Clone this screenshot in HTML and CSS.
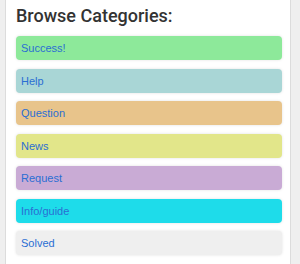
FILE: index.html
```
<!DOCTYPE html>
<html>
    <head>
        <meta content="text/html;charset=utf-8" http-equiv="Content-Type" />
        <title>Browse Categories</title>
        <link rel="stylesheet" href="styles.css">
    </head>
    <body>
        <div class="panel">
            <h2 class="panel-title">Browse Categories:</h2>
            <ul class="cat-list">
                <li><a href="#" class="cat cat-success">Success!</a></li>
                <li><a href="#" class="cat cat-help">Help</a></li>
                <li><a href="#" class="cat cat-question">Question</a></li>
                <li><a href="#" class="cat cat-news">News</a></li>
                <li><a href="#" class="cat cat-request">Request</a></li>
                <li><a href="#" class="cat cat-info">Info/guide</a></li>
                <li><a href="#" class="cat cat-solved">Solved</a></li>
            </ul>
        </div>
    </body>
</html>
```

FILE: styles.css
```
* {
    box-sizing: border-box;
}

body {
    margin: 0;
    background-color: #efefef;
    font-family: "Liberation Sans", Arial, Helvetica, sans-serif;
}

.panel {
    margin-left: 5px;
    width: 286px;
    min-height: 100vh;
    background-color: #fff;
    border: 1px solid #dcdcdc;
    border-top: none;
    border-bottom: none;
    padding: 6px 8px 0 10px;
}

.panel-title {
    margin: 0 0 10px 0;
    font-family: Roboto, "Liberation Sans", sans-serif;
    font-size: 18px;
    line-height: 20px;
    font-weight: 500;
    color: #333;
}

.cat-list {
    list-style: none;
    margin: 0;
    padding: 0;
    display: flex;
    flex-direction: column;
    gap: 8.5px;
}

.cat {
    display: block;
    height: 24px;
    line-height: 24px;
    padding-left: 5px;
    border-radius: 4px;
    box-shadow: 0 0 3px rgba(0, 0, 0, 0.12);
    font-size: 11px;
    color: #2a6ed3;
    text-decoration: none;
}

.cat-success { background-color: #8de99a; }
.cat-help { background-color: #a9d6d6; }
.cat-question { background-color: #e8c48b; }
.cat-news { background-color: #e2e68a; }
.cat-request { background-color: #c9abd5; }
.cat-info { background-color: #1edcea; }
.cat-solved { background-color: #efefef; }
```
